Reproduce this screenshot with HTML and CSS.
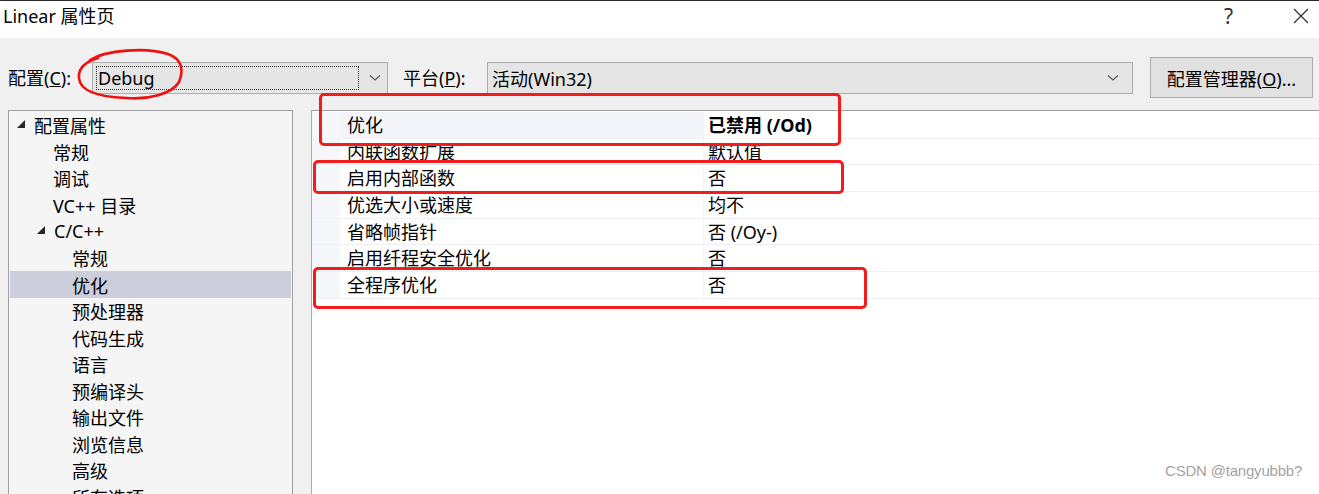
FILE: index.html
```
<!DOCTYPE html>
<html lang="zh-CN">
  <head>
    <meta charset="utf-8" />
    <title>Linear 属性页</title>
    <link rel="stylesheet" href="styles.css">
  </head>

  <body>
    <div class="window">
      <!-- Title bar -->
      <div class="titlebar">
        <span class="title">Linear 属性页</span>
        <span class="help">?</span>
        <span class="close">
          <svg width="16" height="16" viewBox="0 0 16 16">
            <path d="M1 1 L15 15 M15 1 L1 15" stroke="#333" stroke-width="1.3" fill="none" />
          </svg>
        </span>
      </div>

      <div class="dialog">
        <!-- Configuration / platform row -->
        <div class="config-row">
          <span class="field-label">配置(<u>C</u>):</span>
          <div class="combo combo-config">
            <span class="combo-focus">Debug</span>
            <svg class="chevron" width="12" height="8" viewBox="0 0 12 8">
              <path d="M1 1.5 L6 6 L11 1.5" stroke="#555" stroke-width="1.1" fill="none" />
            </svg>
          </div>
          <span class="field-label platform-label">平台(<u>P</u>):</span>
          <div class="combo combo-platform">
            <span class="combo-text">活动(Win32)</span>
            <svg class="chevron" width="12" height="8" viewBox="0 0 12 8">
              <path d="M1 1.5 L6 6 L11 1.5" stroke="#555" stroke-width="1.1" fill="none" />
            </svg>
          </div>
          <button class="manager-btn">配置管理器(<u>O</u>)...</button>
        </div>

        <div class="panes">
          <!-- Tree -->
          <div class="tree">
            <div class="node lvl0"><span class="expander"></span>配置属性</div>
            <div class="node leaf1">常规</div>
            <div class="node leaf1">调试</div>
            <div class="node leaf1">VC++ 目录</div>
            <div class="node lvl1"><span class="expander"></span>C/C++</div>
            <div class="node leaf2">常规</div>
            <div class="node leaf2 selected">优化</div>
            <div class="node leaf2">预处理器</div>
            <div class="node leaf2">代码生成</div>
            <div class="node leaf2">语言</div>
            <div class="node leaf2">预编译头</div>
            <div class="node leaf2">输出文件</div>
            <div class="node leaf2">浏览信息</div>
            <div class="node leaf2">高级</div>
            <div class="node leaf2">所有选项</div>
          </div>

          <!-- Property grid -->
          <div class="grid">
            <div class="prop-row active">
              <span class="gutter"></span>
              <span class="prop-name">优化</span>
              <span class="prop-value bold">已禁用 (/Od)</span>
            </div>
            <div class="prop-row">
              <span class="gutter"></span>
              <span class="prop-name">内联函数扩展</span>
              <span class="prop-value">默认值</span>
            </div>
            <div class="prop-row">
              <span class="gutter"></span>
              <span class="prop-name">启用内部函数</span>
              <span class="prop-value">否</span>
            </div>
            <div class="prop-row">
              <span class="gutter"></span>
              <span class="prop-name">优选大小或速度</span>
              <span class="prop-value">均不</span>
            </div>
            <div class="prop-row">
              <span class="gutter"></span>
              <span class="prop-name">省略帧指针</span>
              <span class="prop-value">否 (/Oy-)</span>
            </div>
            <div class="prop-row">
              <span class="gutter"></span>
              <span class="prop-name">启用纤程安全优化</span>
              <span class="prop-value">否</span>
            </div>
            <div class="prop-row">
              <span class="gutter"></span>
              <span class="prop-name">全程序优化</span>
              <span class="prop-value">否</span>
            </div>
          </div>
        </div>
      </div>

      <!-- Red annotations drawn over the screenshot -->
      <svg class="mark-ellipse" width="120" height="60" viewBox="0 0 120 60">
        <path d="M14 12 C30 2, 70 -1, 92 6 C106 11, 108 22, 103 34 C96 46, 72 52, 50 50 C26 49, 4 44, 3 30 C2 21, 9 14, 22 10"
              stroke="#f01010" stroke-width="2.6" fill="none" stroke-linecap="round" />
      </svg>
      <div class="mark-box box-1"></div>
      <div class="mark-box box-2"></div>
      <div class="mark-box box-3"></div>

      <div class="watermark">CSDN @tangyubbb?</div>
    </div>
  </body>
</html>
```

FILE: styles.css
```
* {
  margin: 0;
  padding: 0;
  box-sizing: border-box;
}

body {
  width: 1319px;
  height: 494px;
  overflow: hidden;
  background-color: #f0f0f0;
  font-family: "Noto Sans", "Noto Sans CJK SC", sans-serif;
  font-size: 18px;
  color: #000;
}

.window {
  position: relative;
  width: 1319px;
  height: 494px;
  overflow: hidden;
}

/* Title bar */
.titlebar {
  height: 38px;
  background-color: #fff;
  border-top: 1px solid #2b2b2b;
  display: flex;
  align-items: center;
  padding-left: 3px;
}

.title {
  flex: 1;
  line-height: 30px;
  margin-top: -7px;
}

.help {
  font-size: 21px;
  color: #333;
  margin-right: 60px;
  margin-top: -8px;
}

.close {
  width: 16px;
  height: 16px;
  margin-right: 10px;
  margin-top: -8px;
  display: flex;
}

/* Dialog body */
.dialog {
  height: 456px;
  display: flex;
  flex-direction: column;
}

.config-row {
  height: 72px;
  padding: 7px 0 0 8px;
  display: flex;
  align-items: center;
}

.field-label {
  width: 84px;
  line-height: 24px;
}

.platform-label {
  margin-left: 15px;
}

.combo {
  height: 32px;
  background-color: #e5e5e5;
  border: 1px solid #adadad;
  display: flex;
  align-items: center;
  padding: 3px;
}

.combo-config {
  width: 296px;
}

.combo-platform {
  width: 646px;
}

.combo-focus {
  width: 263px;
  height: 100%;
  border: 1px dotted #333;
  padding-left: 1px;
  display: flex;
  align-items: center;
}

.combo-text {
  flex: 1;
  padding-left: 1px;
}

.combo-config .chevron {
  margin-left: 10px;
}

.combo-platform .chevron {
  margin-right: 10px;
}

.manager-btn {
  margin-left: 17px;
  width: 163px;
  height: 41px;
  background-color: #e1e1e1;
  border: 1px solid #adadad;
  font-family: inherit;
  font-size: 18px;
  color: #000;
}

.panes {
  flex: 1;
  display: flex;
  min-height: 0;
}

/* Tree */
.tree {
  width: 285px;
  margin-left: 8px;
  background-color: #f5f5f5;
  border: 1px solid #a0a0a0;
  border-bottom: none;
  padding-top: 1px;
}

.node {
  height: 26.55px;
  display: flex;
  align-items: center;
  white-space: nowrap;
}

.expander {
  width: 0;
  height: 0;
  border-left: 8px solid transparent;
  border-bottom: 8px solid #262626;
  margin-right: 9px;
  margin-bottom: 3px;
}

.lvl0 {
  padding-left: 8px;
}

.lvl1 {
  padding-left: 28px;
}

.leaf1 {
  padding-left: 44px;
}

.leaf2 {
  padding-left: 63px;
}

.selected {
  background-color: #cccedb;
  margin: 0 1px;
  padding-left: 62px;
}

/* Property grid */
.grid {
  flex: 1;
  margin-left: 18px;
  background-color: #fff;
  border-left: 1px solid #adadad;
  border-top: 1px solid #a0a0a0;
  padding-top: 1px;
}

.prop-row {
  height: 26.67px;
  display: flex;
  border-bottom: 1px solid #eff0f5;
}

.gutter {
  width: 28px;
  background-color: #f6f7fb;
}

.prop-name {
  width: 363px;
  padding-left: 7px;
  line-height: 26px;
  white-space: nowrap;
}

.prop-value {
  flex: 1;
  padding-left: 4px;
  line-height: 26px;
  border-left: 1px solid #f4f4f8;
}

.active .prop-name {
  background-color: #f3f5fa;
}

.bold {
  font-weight: bold;
}

/* Annotation overlays */
.mark-ellipse {
  position: absolute;
  left: 76px;
  top: 48px;
}

.mark-box {
  position: absolute;
  border: 3px solid #f21c1c;
  border-radius: 5px;
}

.box-1 {
  left: 319px;
  top: 93px;
  width: 522px;
  height: 53px;
}

.box-2 {
  left: 313px;
  top: 160px;
  width: 531px;
  height: 34px;
}

.box-3 {
  left: 313px;
  top: 267px;
  width: 554px;
  height: 42px;
}

.watermark {
  position: absolute;
  left: 1165px;
  top: 462px;
  font-family: "Liberation Sans", sans-serif;
  font-size: 15px;
  letter-spacing: -0.2px;
  color: #a3a3a3;
}
```
